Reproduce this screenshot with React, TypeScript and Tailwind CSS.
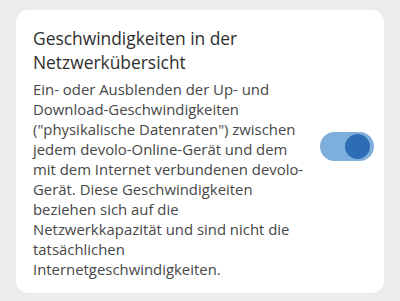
export default function App() {
  return (
    <div className="w-[400px] h-[301px] bg-[#ececee] pt-[10px] px-4 font-['Open_Sans',sans-serif]">
      <div className="bg-white rounded-[12px] pl-[17px] pr-[10px] pt-[16px] pb-[14px] flex items-center">
        <div className="w-[274px] shrink-0">
          <h2 className="text-[17.4px] leading-[24px] text-[#2e2e2e] font-normal">
            Geschwindigkeiten in der Netzwerkübersicht
          </h2>
          <p className="mt-[5px] text-[14.9px] leading-[20px] text-[#474747]">
            Ein- oder Ausblenden der Up- und Download-Geschwindigkeiten
            ("physikalische Datenraten") zwischen jedem devolo-Online-Gerät und
            dem mit dem Internet verbundenen devolo-Gerät. Diese
            Geschwindigkeiten beziehen sich auf die Netzwerkkapazität und sind
            nicht die tatsächlichen Internetgeschwindigkeiten.
          </p>
        </div>
        <div className="ml-auto self-start mt-[106px]">
          <div className="w-[54px] h-[29px] rounded-full bg-[#7eaedb] flex items-center justify-end pr-[4px]">
            <div className="w-[25px] h-[25px] rounded-full bg-[#2e6db4]" />
          </div>
        </div>
      </div>
    </div>
  );
}
